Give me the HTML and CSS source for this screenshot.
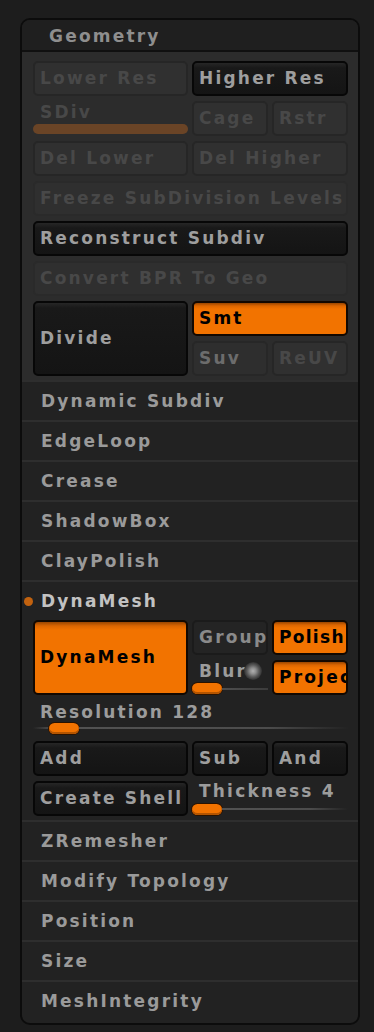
FILE: index.html
```html
<!DOCTYPE html>
<html>
<head>
<meta charset="utf-8">
<title>Geometry</title>
<link rel="stylesheet" href="styles.css">
</head>
<body>
<div class="panel">
  <div class="head">Geometry</div>
  <div class="geo grid">
    <div class="btn dis">Lower Res</div>
    <div class="btn dark c23">Higher Res</div>
    <div class="slot">
      <div class="lbl dim">SDiv</div>
      <div class="bar"></div>
    </div>
    <div class="btn dis">Cage</div>
    <div class="btn dis">Rstr</div>
    <div class="btn dis">Del Lower</div>
    <div class="btn dis c23">Del Higher</div>
    <div class="btn dis faint full">Freeze SubDivision Levels</div>
    <div class="btn dark full">Reconstruct Subdiv</div>
    <div class="btn dis faint full">Convert BPR To Geo</div>
    <div class="btn dark tall">Divide</div>
    <div class="btn orange c23">Smt</div>
    <div class="btn dis semi">Suv</div>
    <div class="btn dis">ReUV</div>
  </div>
  <div class="row">Dynamic Subdiv</div>
  <div class="row">EdgeLoop</div>
  <div class="row">Crease</div>
  <div class="row">ShadowBox</div>
  <div class="row">ClayPolish</div>
  <div class="dyna">
    <div class="title"><span class="dot"></span>DynaMesh</div>
    <div class="grid inner">
      <div class="btn orange tall big">DynaMesh</div>
      <div class="btn soft">Group</div>
      <div class="btn orange tight">Polish</div>
      <div class="slot">
        <div class="lblrow"><span class="lbl">Blur</span><span class="led"></span></div>
        <div class="slider s13"><span class="knob"></span><span class="track short"></span></div>
      </div>
      <div class="btn orange">Project</div>
    </div>
    <div class="res">
      <div class="lbl">Resolution 128</div>
      <div class="slider s12"><span class="pre"></span><span class="knob"></span><span class="track"></span></div>
    </div>
    <div class="grid inner">
      <div class="btn dark">Add</div>
      <div class="btn dark">Sub</div>
      <div class="btn dark">And</div>
      <div class="btn dark">Create Shell</div>
      <div class="slot c23">
        <div class="lbl thick">Thickness 4</div>
        <div class="slider s14"><span class="knob"></span><span class="track"></span></div>
      </div>
    </div>
  </div>
  <div class="row">ZRemesher</div>
  <div class="row">Modify Topology</div>
  <div class="row">Position</div>
  <div class="row">Size</div>
  <div class="row">MeshIntegrity</div>
</div>
</body>
</html>
```

FILE: styles.css
```css
* { box-sizing: border-box; }
html, body { margin: 0; padding: 0; }
body {
  background: #1d1d1d;
  width: 374px;
  height: 1032px;
  overflow: hidden;
  font-family: "DejaVu Sans", Verdana, sans-serif;
  font-weight: bold;
  font-size: 17px;
  letter-spacing: 2.2px;
}
.panel {
  margin: 18px 0 0 20px;
  width: 340px;
  border: 2px solid #0c0c0c;
  border-radius: 10px;
  background: #222222;
  overflow: hidden;
  padding-bottom: 3px;
}
.head {
  height: 32px;
  padding: 2px 0 0 27px;
  line-height: 28px;
  color: #8e8e8e;
  background: #1f1f1f;
  border-bottom: 2px solid #101010;
}
.grid {
  display: grid;
  grid-template-columns: 155px 76px 76px;
  column-gap: 4px;
  row-gap: 5px;
  grid-auto-rows: 35px;
}
.geo {
  background: #2c2c2c;
  padding: 9px 9px 4px 11px;
}
.c23 { grid-column: 2 / 4; }
.full { grid-column: 1 / 4; }
.tall { grid-row: span 2; }

.btn {
  display: flex;
  align-items: center;
  padding-left: 5px;
  border: 2px solid #070707;
  border-radius: 5px;
  white-space: nowrap;
  overflow: hidden;
  line-height: 31px;
}
.dark {
  background: linear-gradient(#262626, #191919 5px, #141414);
  color: #9e9e9e;
}
.dis {
  background: #303030;
  border-color: #262626;
  color: #484848;
}
.dis.faint { background: #2f2f2f; border-color: #2a2a2a; }
.dis.semi { color: #6c6c6c; border-color: #272727; background: #2e2e2e; }
.orange {
  background: linear-gradient(#9a4600, #dd6600 3px, #f27300 6px, #f27300);
  border-color: #120800;
  color: #000;
}
.tight { letter-spacing: 1.3px; }
.big { background: linear-gradient(#9a4600, #dd6600 4px, #f27300 8px, #f27300); }
.soft {
  background: #242424;
  border-color: #1b1b1b;
  color: #8a8a8a;
}

.slot { display: flex; flex-direction: column; min-width: 0; }
.lbl {
  padding-left: 7px;
  line-height: 22px;
  color: #9c9c9c;
  white-space: nowrap;
}
.lbl.dim { color: #484848; }
.bar {
  margin-top: 1px;
  height: 10px;
  border-radius: 5px;
  background: #6a4426;
}

.row {
  height: 40px;
  border-top: 2px solid #2e2e2e;
  padding-left: 19px;
  line-height: 38px;
  color: #9a9a9a;
  white-space: nowrap;
}
.dyna {
  border-top: 2px solid #2e2e2e;
  padding-bottom: 4px;
}
.title {
  height: 38px;
  display: flex;
  align-items: center;
  padding-left: 2px;
  color: #c2c2c2;
}
.dot {
  width: 9px;
  height: 9px;
  border-radius: 50%;
  background: #c2620f;
  margin-right: 8px;
  flex: none;
}
.inner { margin: 0 9px 0 11px; }

.lblrow { display: flex; align-items: center; height: 22px; }
.lblrow .lbl { padding-left: 7px; }
.led {
  flex: none;
  width: 18px;
  height: 18px;
  border-radius: 50%;
  margin-left: -3px;
  background: radial-gradient(circle, #b0b0b0 0, #8e8e8e 3px, #5a5a5a 6px, #303030 9px);
}
.slider { display: flex; align-items: center; }
.s12 { height: 12px; }
.s13 { height: 13px; }
.s14 { height: 14px; }
.knob {
  flex: none;
  width: 30px;
  height: 11px;
  border-radius: 6px;
  background: #f27300;
  box-shadow: inset 0 -2px 0 #b35400, 0 0 0 1px #2a1300;
}
.track {
  flex: 1;
  height: 2px;
  background: linear-gradient(to right, #525252, #4c4c4c 70%, rgba(76,76,76,0));
}
.track.short { background: linear-gradient(to right, #4e4e4e, #3c3c3c); }
.pre {
  flex: none;
  width: 16px;
  height: 2px;
  background: linear-gradient(to right, rgba(60,60,60,0), #4a4a4a);
}
.res {
  margin: 0 9px 7px 11px;
  padding-top: 7px;
}
.res .lbl { line-height: 20px; }
.thick { line-height: 21px; }
```
